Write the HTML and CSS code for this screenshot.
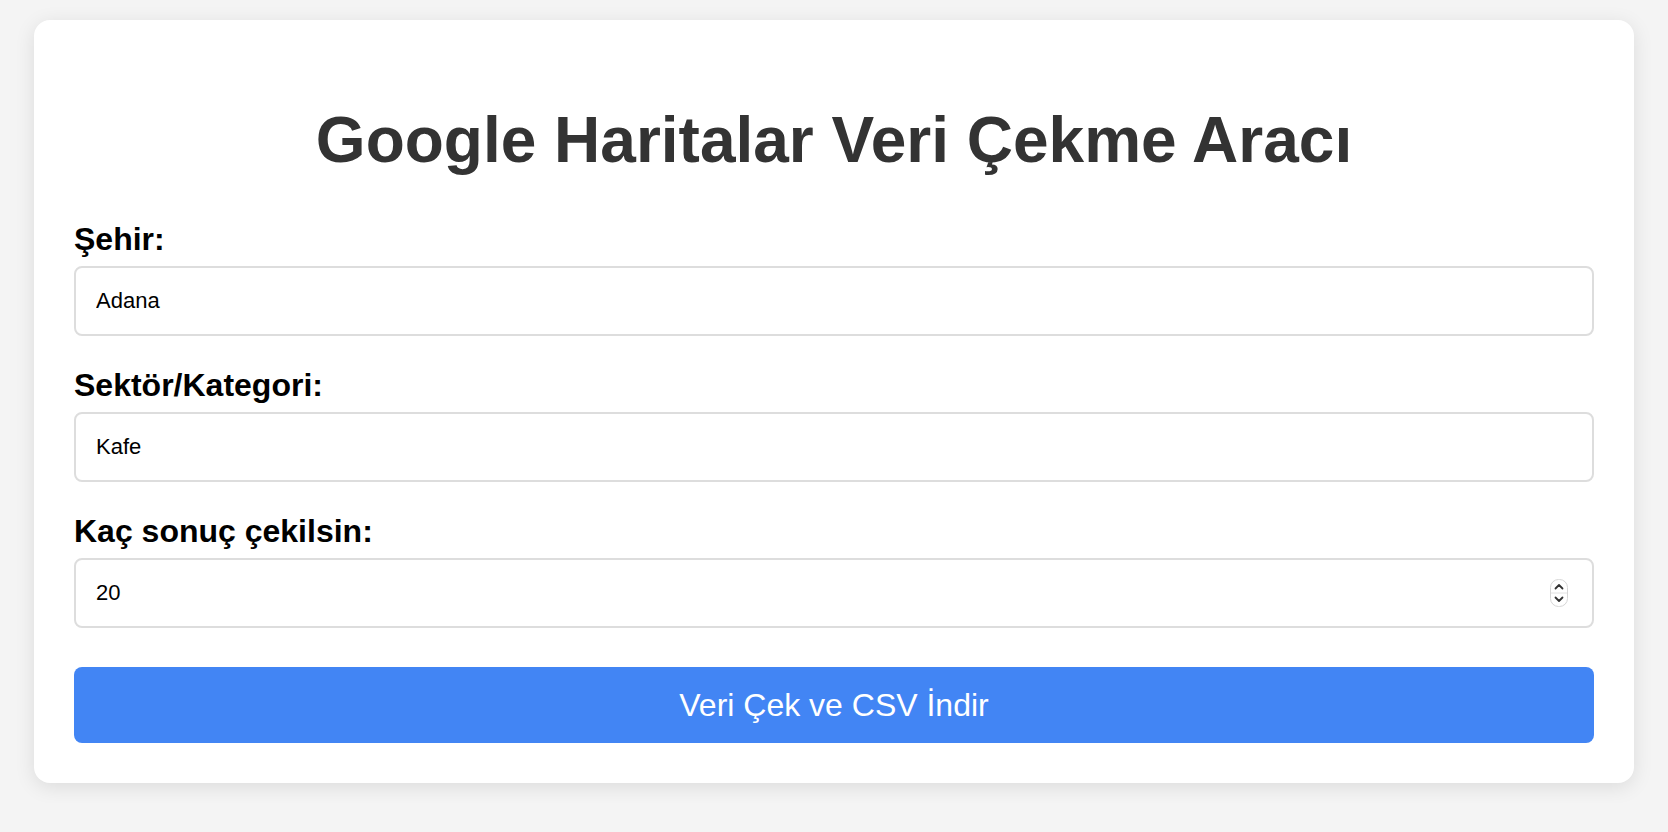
FILE: index.html
```html
<!DOCTYPE html>
<html lang="tr">

<head>
  <title>Google Haritalar Veri Çekme Aracı</title>
  <meta charset="utf-8" />
  <meta name="viewport" content="width=device-width, initial-scale=1.0" />
  <link rel="stylesheet" href="styles.css">
</head>

<body>
  <div class="container">
    <h1>Google Haritalar Veri Çekme Aracı</h1>
    <form id="scrape-form">
      <label for="city">Şehir:</label>
      <input type="text" id="city" name="city" value="Adana">

      <label for="category">Sektör/Kategori:</label>
      <input type="text" id="category" name="category" value="Kafe">

      <label for="limit">Kaç sonuç çekilsin:</label>
      <div class="number-field">
        <input type="number" id="limit" name="limit" value="20" min="1">
        <span class="spinner">
          <svg width="18" height="28" viewBox="0 0 18 28">
            <rect x="0.5" y="0.5" width="17" height="27" rx="8" fill="#fff" stroke="#d6d6d6" />
            <line x1="1" y1="14" x2="17" y2="14" stroke="#e2e2e2" />
            <path d="M5.5 9.5 L9 6 L12.5 9.5" fill="none" stroke="#333" stroke-width="1.8" stroke-linecap="round" stroke-linejoin="round" />
            <path d="M5.5 18.5 L9 22 L12.5 18.5" fill="none" stroke="#333" stroke-width="1.8" stroke-linecap="round" stroke-linejoin="round" />
          </svg>
        </span>
      </div>

      <button type="submit">Veri Çek ve CSV İndir</button>
    </form>
  </div>
</body>

</html>
```

FILE: styles.css
```css
body {
  margin: 0;
  font-family: "Liberation Sans", Arial, sans-serif;
  background-color: #f4f4f4;
}

.container {
  max-width: 1600px;
  margin: 20px auto;
  padding: 40px;
  box-sizing: border-box;
  background-color: white;
  border-radius: 16px;
  box-shadow: 0 4px 20px rgba(0, 0, 0, 0.1);
}

h1 {
  font-size: 64px;
  margin: 43px 0 44px;
  text-align: center;
  color: #333;
}

label {
  display: block;
  font-size: 32px;
  font-weight: bold;
  color: #000;
  margin-bottom: 8px;
}

input {
  display: block;
  width: 100%;
  box-sizing: border-box;
  padding: 20px;
  margin-bottom: 31px;
  font-family: "Liberation Sans", Arial, sans-serif;
  font-size: 22px;
  line-height: 26px;
  color: #000;
  border: 2px solid #ddd;
  border-radius: 8px;
  background: white;
}

input[type="number"] {
  -moz-appearance: textfield;
}

input::-webkit-inner-spin-button,
input::-webkit-outer-spin-button {
  -webkit-appearance: none;
  margin: 0;
}

.number-field {
  position: relative;
}

.spinner {
  position: absolute;
  top: 21px;
  right: 26px;
  display: flex;
}

button {
  display: block;
  width: 100%;
  margin-top: 39px;
  padding: 20px;
  font-family: "Liberation Sans", Arial, sans-serif;
  font-size: 32px;
  line-height: 36px;
  color: white;
  background-color: #4285f4;
  border: none;
  border-radius: 8px;
  cursor: pointer;
}
```
